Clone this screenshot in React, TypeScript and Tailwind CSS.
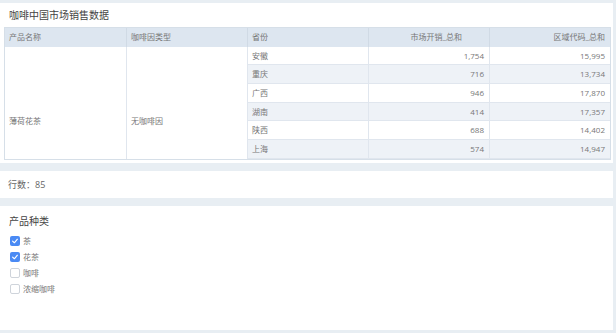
import React from 'react';

const rows = [
  { city: '安徽', cost: '1,754', code: '15,995' },
  { city: '重庆', cost: '716', code: '13,734' },
  { city: '广西', cost: '946', code: '17,870' },
  { city: '湖南', cost: '414', code: '17,357' },
  { city: '陕西', cost: '688', code: '14,402' },
  { city: '上海', cost: '574', code: '14,947' },
  { city: '', cost: '', code: '' },
  { city: '', cost: '', code: '' },
];

const categories = [
  { label: '茶', checked: true },
  { label: '花茶', checked: true },
  { label: '咖啡', checked: false },
  { label: '浓缩咖啡', checked: false },
];

const font = "font-['Open_Sans','Noto_Sans_CJK_SC',sans-serif]";

const Checkbox = ({ checked }: { checked: boolean }) =>
  checked ? (
    <span className="flex h-[10px] w-[10px] items-center justify-center rounded-[2px] bg-[#4a8af4]">
      <svg viewBox="0 0 10 10" className="h-[8px] w-[8px]">
        <path d="M2 5.2 L4.2 7.2 L8 2.8" fill="none" stroke="#fff" strokeWidth="1.4" strokeLinecap="round" strokeLinejoin="round" />
      </svg>
    </span>
  ) : (
    <span className="h-[10px] w-[10px] rounded-[2px] border border-[#cfd4db] bg-white" />
  );

export default function App() {
  return (
    <div className={`flex h-[333px] w-[616px] flex-col bg-[#e8eef3] pt-[3px] pr-[3px] pb-[3px] ${font}`}>
      {/* sales table panel */}
      <div className="flex h-[160px] flex-col bg-white pl-[4px] pr-[2px]">
        <div className="flex h-[24px] items-center pl-[5px] text-[10px] text-[#444]">咖啡中国市场销售数据</div>
        <div className="h-[133px] overflow-hidden border border-[#d6dfe8] text-[8px] text-[#777]">
          <div className="grid grid-cols-5 auto-rows-[18.7px]">
            <div className="flex items-center bg-[#dde6f0] pl-[4px]">产品名称</div>
            <div className="flex items-center border-l border-[#d0dae5] bg-[#dde6f0] pl-[4px]">咖啡因类型</div>
            <div className="flex items-center border-l border-[#d0dae5] bg-[#dde6f0] pl-[4px]">省份</div>
            <div className="flex items-center justify-end border-l border-[#d0dae5] bg-[#dde6f0] pr-[27px]">市场开销_总和</div>
            <div className="flex items-center justify-end border-l border-[#d0dae5] bg-[#dde6f0] pr-[5px]">区域代码_总和</div>

            <div className="row-span-8 flex items-center pl-[4px]">薄荷花茶</div>
            <div className="row-span-8 flex items-center border-l border-[#e0e6ee] pl-[4px]">无咖啡因</div>
            {rows.map((r, i) => (
              <React.Fragment key={i}>
                <div className={`flex items-center border-l border-b border-[#e0e6ee] pl-[4px] ${i % 2 ? 'bg-[#eef2f7]' : 'bg-white'}`}>{r.city}</div>
                <div className={`flex items-center justify-end border-l border-b border-[#e0e6ee] pr-[5px] ${i % 2 ? 'bg-[#eef2f7]' : 'bg-white'}`}>{r.cost}</div>
                <div className={`flex items-center justify-end border-l border-b border-[#e0e6ee] pr-[5px] ${i % 2 ? 'bg-[#eef2f7]' : 'bg-white'}`}>{r.code}</div>
              </React.Fragment>
            ))}
          </div>
        </div>
      </div>

      {/* row count */}
      <div className="mt-[8px] flex h-[27px] items-center bg-white pl-[8px] text-[9px] text-[#666]">行数：85</div>

      {/* category filter */}
      <div className="mt-[8px] flex flex-1 flex-col bg-white pl-[9px] pt-[9px]">
        <div className="text-[10px] leading-[13px] text-[#444]">产品种类</div>
        <div className="mt-[8px] flex flex-col gap-[6px] pl-[1px]">
          {categories.map((c) => (
            <label key={c.label} className="flex h-[10px] items-center gap-[3px] text-[8px] text-[#777]">
              <Checkbox checked={c.checked} />
              <span>{c.label}</span>
            </label>
          ))}
        </div>
      </div>
    </div>
  );
}
